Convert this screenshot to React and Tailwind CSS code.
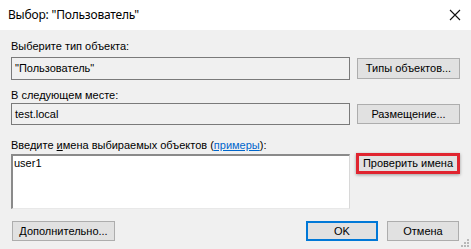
import React from "react";

const font = { fontFamily: '"Liberation Sans", Arial, sans-serif' };

function Btn({ children, className = "" }) {
  return (
    <div
      className={
        "flex items-center justify-center bg-[#e1e1e1] border border-[#adadad] text-[11px] text-black " +
        className
      }
    >
      {children}
    </div>
  );
}

export default function App() {
  return (
    <div
      className="w-[471px] h-[249px] flex flex-col bg-[#f0f0f0] overflow-hidden text-black"
      style={font}
    >
      <div className="h-[30px] bg-white flex items-center justify-between pl-[8px] pr-[9px] shrink-0">
        <span className="text-[12px] font-['Noto_Sans',sans-serif] tracking-[-0.2px]">
          Выбор: "Пользователь"
        </span>
        <svg width="12" height="12" viewBox="0 0 12 12" className="mr-[1px]">
          <path d="M1 1 L11 11 M11 1 L1 11" stroke="#111" strokeWidth="1.1" />
        </svg>
      </div>

      <div className="flex-1 flex flex-col pl-[11px] relative">
        <div className="mt-[10px] h-[13px] leading-[13px] text-[11px]">
          Выберите тип объекта:
        </div>
        <div className="mt-[4px] flex items-center h-[23px]">
          <div className="w-[339px] h-[23px] border border-[#7a7a7a] bg-[#f0f0f0] flex items-center pl-[3px] text-[11px]">
            "Пользователь"
          </div>
          <Btn className="ml-[7px] w-[103px] h-[21px]">Типы объектов...</Btn>
        </div>

        <div className="mt-[9px] h-[13px] leading-[13px] text-[11px]">
          В следующем месте:
        </div>
        <div className="mt-[1px] flex items-center h-[22px]">
          <div className="w-[339px] h-[22px] border border-[#7a7a7a] bg-[#f0f0f0] flex items-center pl-[3px] text-[11px]">
            test.local
          </div>
          <Btn className="ml-[7px] w-[103px] h-[20px]">Размещение...</Btn>
        </div>

        <div className="mt-[14px] h-[13px] leading-[13px] text-[11px]">
          Введите <span className="underline">и</span>мена выбираемых объектов (
          <span className="text-[#0066cc] underline">примеры</span>):
        </div>
        <div className="mt-[2px] flex items-start">
          <div className="w-[339px] h-[55px] bg-white border-t-2 border-l-2 border-t-[#8a8a8a] border-l-[#8a8a8a] border-r border-b border-r-[#d8d8d8] border-b-[#e8e8e8] text-[11px] leading-[13px] pl-[1px] pt-[1px]">
            user1
          </div>
          <div className="ml-[6px] -mt-[1px] w-[104px] h-[21px] border-[3px] border-[#e0242f] shadow-[0_1px_3px_rgba(0,0,0,0.35)] bg-[#e1e1e1] flex items-center justify-center text-[11px]">
            Проверить имена
          </div>
        </div>

        <div className="mt-[12px] flex items-center h-[20px]">
          <Btn className="ml-[1px] w-[103px] h-[20px]">Дополнительно...</Btn>
          <div className="ml-auto flex gap-[9px] mr-[12px]">
            <div className="w-[72px] h-[20px] border-2 border-[#0078d7] bg-[#e1e1e1] flex items-center justify-center text-[11px]">
              OK
            </div>
            <Btn className="w-[72px] h-[20px]">Отмена</Btn>
          </div>
        </div>

        <svg
          width="8"
          height="8"
          viewBox="0 0 8 8"
          className="absolute right-[2px] bottom-[2px]"
        >
          {[
            [6, 0],
            [3, 3],
            [6, 3],
            [0, 6],
            [3, 6],
            [6, 6],
          ].map(([x, y], i) => (
            <rect key={i} x={x} y={y} width="2" height="2" fill="#b8b8b8" />
          ))}
        </svg>
      </div>
    </div>
  );
}
